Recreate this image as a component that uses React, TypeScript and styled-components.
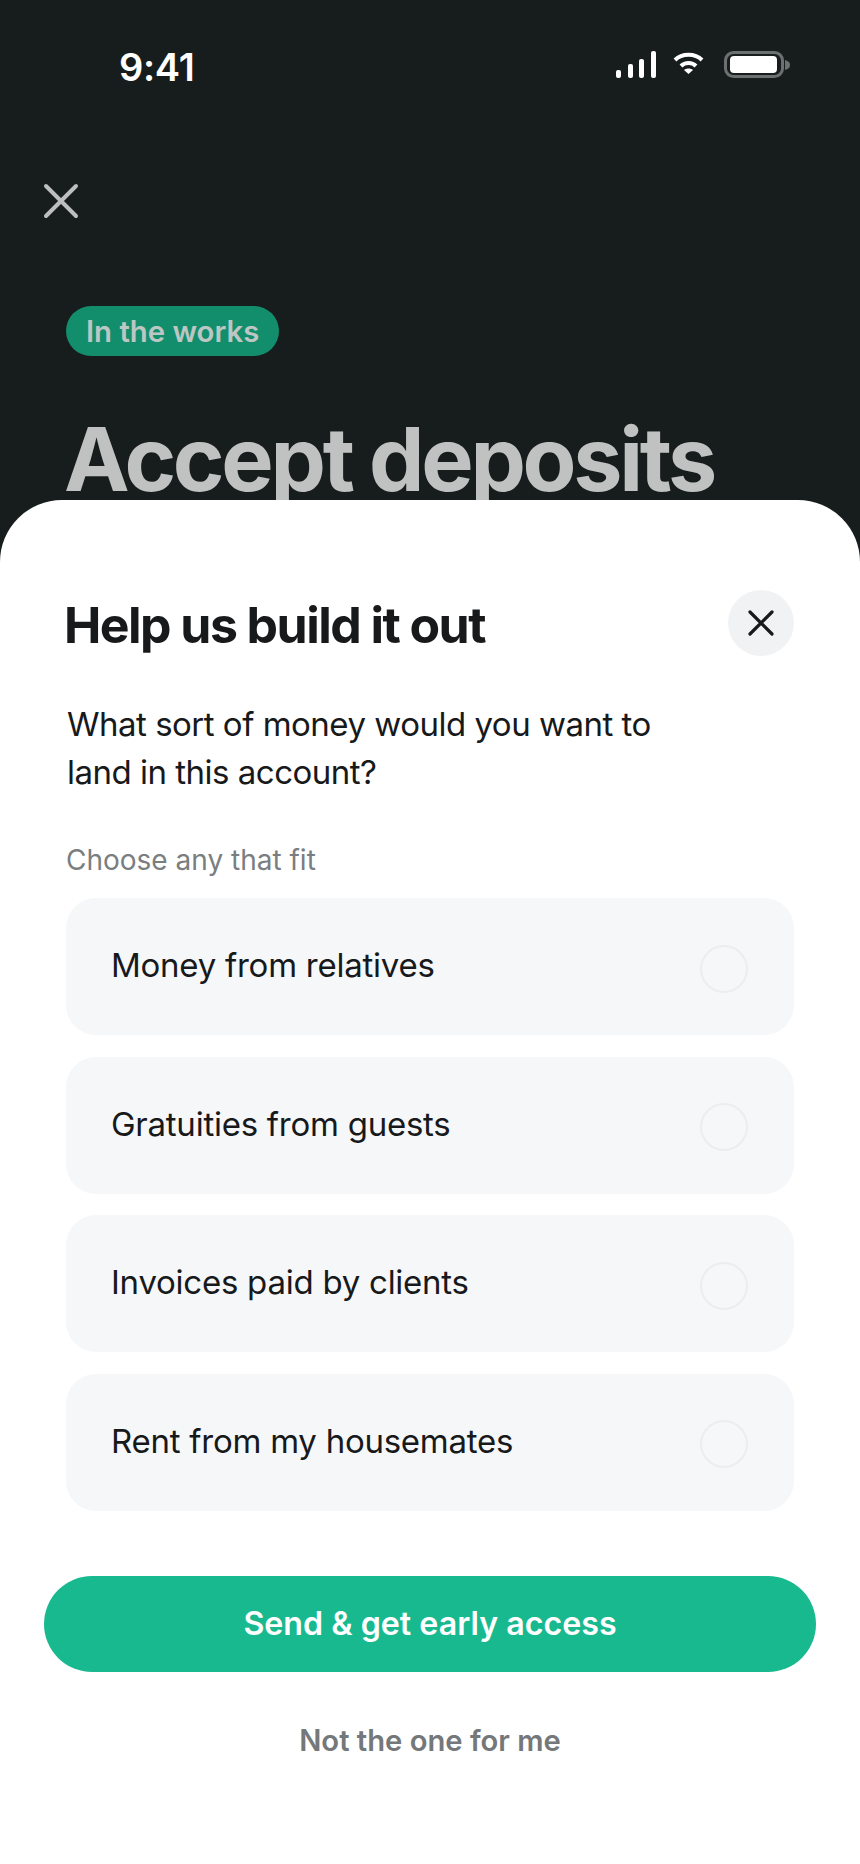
import styled, { createGlobalStyle } from "styled-components";

const GlobalStyle = createGlobalStyle`
  html, body {
    margin: 0;
    padding: 0;
    background: #171d1d;
  }
  * {
    box-sizing: border-box;
  }
`;

const Page = styled.div`
  width: 860px;
  height: 1864px;
  display: flex;
  flex-direction: column;
  overflow: hidden;
  font-family: Inter, "Liberation Sans", sans-serif;
  background: #171d1d;
`;

const Hero = styled.header`
  height: 500px;
  flex: none;
  overflow: hidden;
  display: flex;
  flex-direction: column;
`;

const StatusBar = styled.div`
  height: 92px;
  flex: none;
  padding: 43px 70px 0 119px;
  display: flex;
  justify-content: space-between;
  align-items: flex-start;
`;

const Clock = styled.span`
  font-size: 38px;
  line-height: 48px;
  font-weight: 600;
  letter-spacing: -0.3px;
  color: #fff;
`;

const StatusIcons = styled.div`
  display: flex;
  align-items: flex-start;
  margin-top: 8px;
`;

const SignalIcon = styled.svg`
  display: block;
  width: 40px;
  height: 28px;
`;

const WifiIcon = styled.svg`
  display: block;
  width: 31px;
  height: 24px;
  margin: 1px 20px 0 17px;
`;

const BatteryIcon = styled.svg`
  display: block;
  width: 66px;
  height: 28px;
`;

const DismissIcon = styled.svg`
  display: block;
  margin: 89px 0 0 41px;
  width: 40px;
  height: 40px;
  flex: none;
`;

const Badge = styled.span`
  align-self: flex-start;
  flex: none;
  margin: 85px 0 0 66px;
  height: 50px;
  padding: 0 20px;
  display: flex;
  align-items: center;
  border-radius: 25px;
  background: #138e6d;
  color: #bcc6c2;
  font-size: 29.3px;
  font-weight: 600;
`;

const HeroTitle = styled.h1`
  margin: 50px 0 0 64px;
  flex: none;
  font-size: 88px;
  line-height: 106px;
  font-weight: 700;
  letter-spacing: -3.3px;
  white-space: nowrap;
  color: #c0c2c1;
`;

const Sheet = styled.main`
  flex: 1;
  background: #fff;
  border-radius: 62px 62px 0 0;
  padding: 90px 66px 0;
  display: flex;
  flex-direction: column;
`;

const SheetHeader = styled.div`
  display: flex;
  justify-content: space-between;
  align-items: flex-start;
`;

const SheetTitle = styled.h2`
  margin: 0 0 0 -2px;
  font-size: 50px;
  line-height: 70px;
  font-weight: 700;
  letter-spacing: -1.55px;
  color: #17191b;
`;

const CloseButton = styled.button`
  width: 66px;
  height: 66px;
  border: 0;
  border-radius: 50%;
  padding: 0;
  background: #f1f2f4;
  display: flex;
  align-items: center;
  justify-content: center;
`;

const Question = styled.p`
  margin: 40px 0 0 1px;
  font-size: 33px;
  line-height: 48px;
  letter-spacing: -0.5px;
  color: #17191b;
`;

const Hint = styled.p`
  margin: 44px 0 0;
  font-size: 28px;
  line-height: 40px;
  color: #7a7e80;
`;

const Options = styled.div`
  margin-top: 18px;
  display: flex;
  flex-direction: column;
  gap: 21.5px;
`;

const Option = styled.label`
  height: 137px;
  padding: 0 46px 3px 45px;
  border-radius: 30px;
  background: #f6f7f9;
  display: flex;
  align-items: center;
  justify-content: space-between;
  font-size: 33px;
  letter-spacing: -0.25px;
  color: #17191b;
`;

const Radio = styled.span`
  width: 48px;
  height: 48px;
  margin-top: 7px;
  border-radius: 50%;
  border: 2px solid #ecedee;
`;

const PrimaryButton = styled.button`
  margin: 65px -22px 0;
  height: 96px;
  flex: none;
  border: 0;
  border-radius: 48px;
  background: #18b98f;
  color: #fff;
  font-family: inherit;
  font-size: 32.2px;
  font-weight: 600;
`;

const SecondaryButton = styled.button`
  margin-top: 34px;
  height: 70px;
  flex: none;
  border: 0;
  background: none;
  color: #74787a;
  font-family: inherit;
  font-size: 29.2px;
  font-weight: 600;
`;

const options = [
  "Money from relatives",
  "Gratuities from guests",
  "Invoices paid by clients",
  "Rent from my housemates",
];

export default function App() {
  return (
    <Page>
      <GlobalStyle />
      <Hero>
        <StatusBar>
          <Clock>9:41</Clock>
          <StatusIcons>
            <SignalIcon viewBox="0 0 40 28" fill="#fff">
              <rect x="0" y="19" width="5" height="8" rx="2" />
              <rect x="12" y="13" width="5" height="14" rx="2" />
              <rect x="23" y="8" width="5" height="19" rx="2" />
              <rect x="35" y="0" width="5" height="27" rx="2" />
            </SignalIcon>
            <WifiIcon viewBox="0 0 31 24" fill="none" stroke="#fff" strokeWidth="4">
              <path d="M2 8 C9 1 22 1 29 8" />
              <path d="M8 14 C12 10 19 10 23 14" />
              <path d="M15.5 22 L11 18 C13.5 16 17.5 16 20 18 Z" fill="#fff" stroke="none" />
            </WifiIcon>
            <BatteryIcon viewBox="0 0 66 28" fill="none">
              <rect x="1.5" y="1.5" width="57" height="24" rx="8" stroke="#6d7070" strokeWidth="3" />
              <rect x="6" y="5" width="47" height="17" rx="4" fill="#fff" />
              <path d="M61 9 C65 10 66 12 66 14 C66 16 65 18 61 19 Z" fill="#6d7070" />
            </BatteryIcon>
          </StatusIcons>
        </StatusBar>
        <DismissIcon viewBox="0 0 40 40" fill="none" stroke="#bcbfbe" strokeWidth="4" strokeLinecap="round">
          <path d="M5 5 L35 35 M35 5 L5 35" />
        </DismissIcon>
        <Badge>In the works</Badge>
        <HeroTitle>Accept deposits</HeroTitle>
      </Hero>
      <Sheet>
        <SheetHeader>
          <SheetTitle>Help us build it out</SheetTitle>
          <CloseButton aria-label="Close">
            <svg width="28" height="28" viewBox="0 0 28 28" fill="none" stroke="#17191b" strokeWidth="3.2" strokeLinecap="round">
              <path d="M3 3 L25 25 M25 3 L3 25" />
            </svg>
          </CloseButton>
        </SheetHeader>
        <Question>
          What sort of money would you want to
          <br />
          land in this account?
        </Question>
        <Hint>Choose any that fit</Hint>
        <Options>
          {options.map((option) => (
            <Option key={option}>
              {option}
              <Radio />
            </Option>
          ))}
        </Options>
        <PrimaryButton>Send &amp; get early access</PrimaryButton>
        <SecondaryButton>Not the one for me</SecondaryButton>
      </Sheet>
    </Page>
  );
}
